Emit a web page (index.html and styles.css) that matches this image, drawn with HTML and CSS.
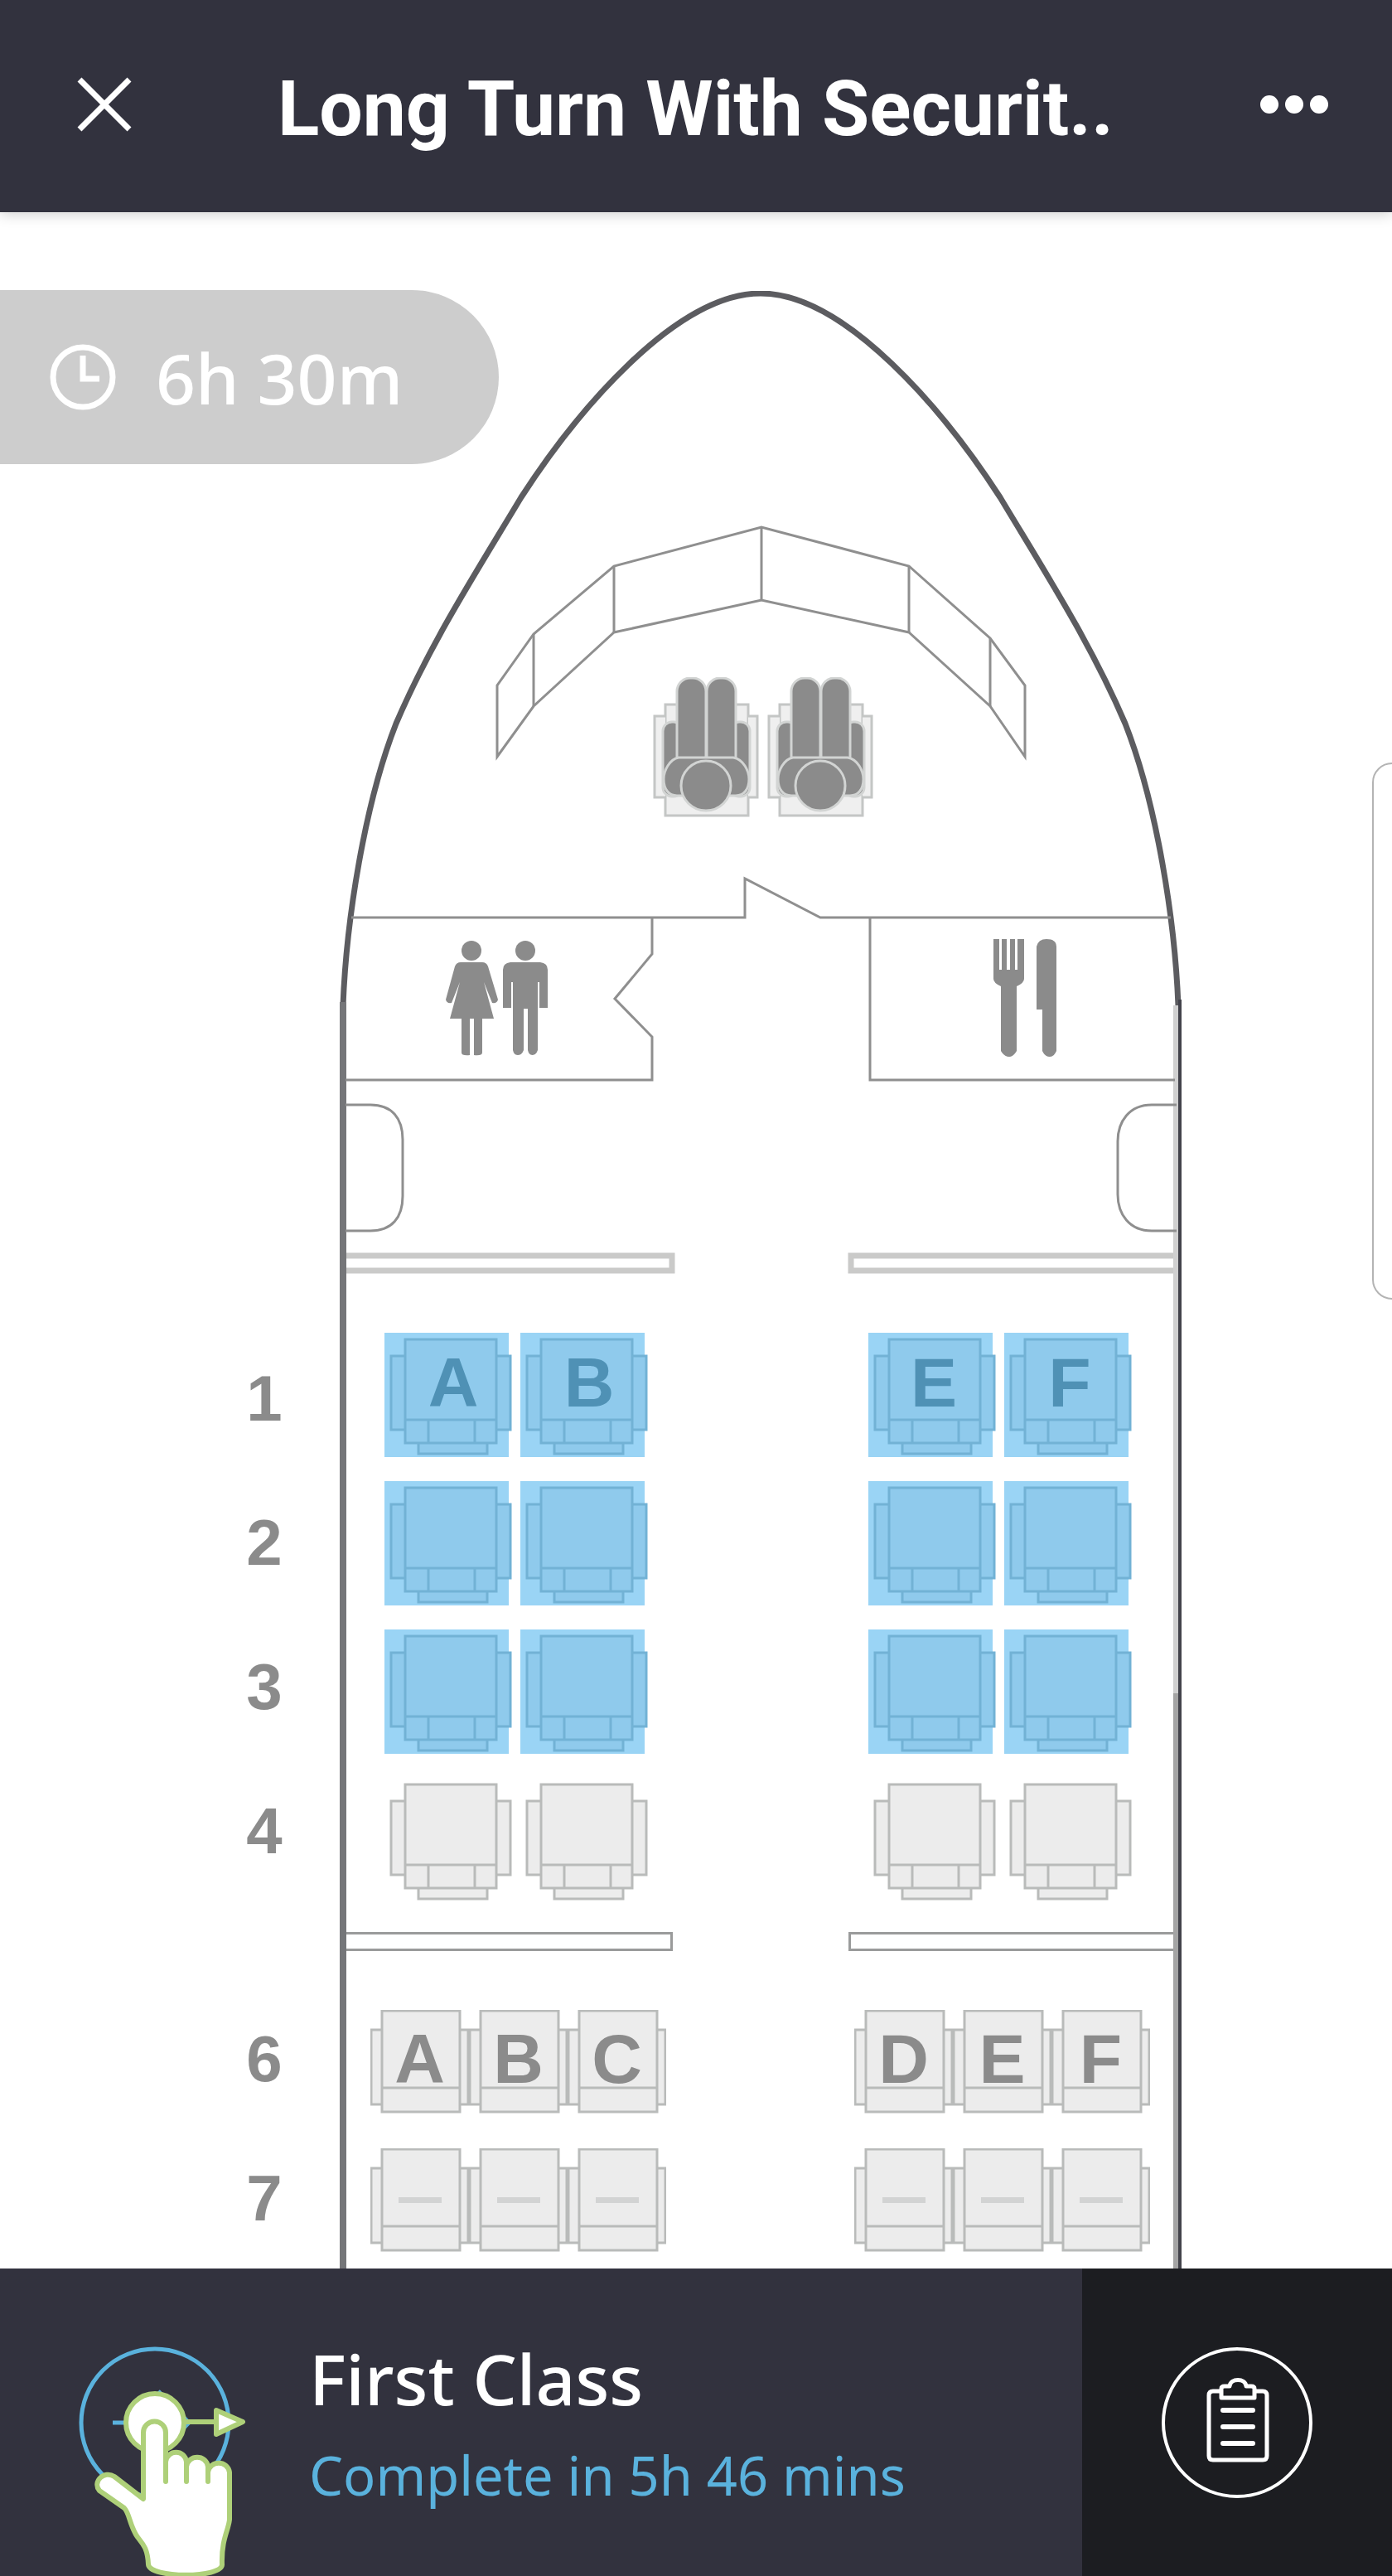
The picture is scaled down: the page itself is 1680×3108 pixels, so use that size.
FILE: index.html
```html
<!DOCTYPE html>
<html lang="en">
<head>
<meta charset="utf-8">
<meta name="viewport" content="width=device-width, initial-scale=1">
<title>Long Turn With Security</title>
<link rel="stylesheet" href="styles.css">
</head>
<body>
<svg class="sprite" aria-hidden="true">
  <symbol id="seat-first" viewBox="0 0 158 150">
    <path d="M25 28H8v89h17M135 28h17v89h-17M41 133v13h83v-13"/>
    <rect x="25" y="8" width="110" height="125"/>
    <path d="M25 105h110M53 105v28M109 105v28"/>
  </symbol>
  <symbol id="seat-economy" viewBox="0 0 119 125">
    <path d="M14 24H1v90h13M108 24h10v90h-10"/>
    <rect x="14" y="1" width="94" height="122"/>
    <path d="M14 94h94"/>
  </symbol>
  <symbol id="pilot" viewBox="0 0 134 172">
    <g class="pilot-seat">
      <path d="M18 33h100v134H18z"/>
      <path d="M18 47H5v98h13M118 47h11v98h-11"/>
    </g>
    <g class="pilot-body">
      <rect x="15" y="54" width="24" height="90" rx="11"/>
      <rect x="96" y="54" width="24" height="90" rx="11"/>
      <rect x="32" y="1" width="35" height="110" rx="16"/>
      <rect x="68" y="1" width="35" height="110" rx="16"/>
      <path d="M34 97h66c12 2 19 16 19 26 0 12-6 20-16 20H32c-10 0-16-8-16-20 0-10 7-24 18-26z"/>
      <circle cx="67" cy="131" r="30"/>
    </g>
  </symbol>
</svg>

<header class="topbar">
  <button class="icon-button" type="button" aria-label="Close">
    <svg width="66" height="66" viewBox="0 0 66 66"><path d="M3 3l60 60M63 3L3 63" stroke="currentColor" stroke-width="7"/></svg>
  </button>
  <h1>Long Turn With Securit..</h1>
  <button class="icon-button" type="button" aria-label="More options">
    <svg width="84" height="24" viewBox="0 0 84 24" fill="currentColor"><circle cx="12" cy="12" r="11"/><circle cx="42" cy="12" r="11"/><circle cx="72" cy="12" r="11"/></svg>
  </button>
</header>

<main class="map">
  <div class="timer">
    <svg width="84" height="84" viewBox="0 0 84 84" fill="none" stroke="currentColor" stroke-width="7"><circle cx="42" cy="42" r="36"/><path d="M42 16v28h20"/></svg>
    <span>6h 30m</span>
  </div>
  <div class="edge-panel"></div>

  <div class="aircraft">
    <svg class="nose" viewBox="410 351 1016 1249" aria-hidden="true">
      <g class="hull">
        <path d="M414 1213C418 1110 440 970 478 873C520 775 575 690 629 600C695 498 815 354 918 354C1021 354 1141 498 1207 600C1261 690 1316 775 1358 873C1396 970 1418 1110 1422 1213"/>
      </g>
      <path class="wall-left" d="M414 1209V1600"/>
      <path class="wall-inner" d="M1419 1213V1600"/>
      <path class="wall-outer" d="M1424 1206V1600"/>
      <g class="line">
        <path d="M600 913V827L644 765L741 683L919 636L1097 683L1195 770L1237 827V913L1195 852L1097 763L919 724L741 763L644 852Z"/>
        <path d="M644 765v87M741 683v80M1097 683v80M1195 770v82M919 636v88"/>
        <path d="M424 1107H899V1060L990 1107H1413"/>
        <path d="M787 1107v44L742 1205L787 1251v52H417"/>
        <path d="M1050 1107v196H1418"/>
        <path d="M417 1333h30c26 0 39 16 39 42v68c0 26-13 42-39 42h-30"/>
        <path d="M1420 1333h-30c-27 0-41 20-41 44v64c0 24 14 44 41 44h30"/>
      </g>
      <g class="partition">
        <path d="M418 1515H811V1533H418"/>
        <path d="M1416 1515H1027V1533H1416"/>
      </g>
      <use href="#pilot" x="785" y="817" width="134" height="172"/>
      <use href="#pilot" x="923" y="817" width="134" height="172"/>
      <g class="glyph">
        <circle cx="569" cy="1147" r="12"/>
        <path d="M556 1161h26q5 0 7 5l12 40q-1 5-7 4l-10-25 12 44h-14v41q0 4-10 3v-44h-5v44q-10 1-10-3v-41h-14l12-44-10 25q-6 1-7-4l11-40q2-5 7-5z"/>
        <circle cx="634" cy="1147" r="12"/>
        <path d="M616 1161h36q9 1 9 9v46h-10v-31h-2v82q-2 6-6 6-5 0-6-6v-50h-5v50q-2 6-7 6-5 0-6-6v-82h-2v31h-10v-46q0-8 9-9z"/>
        <path d="M1199 1133h7v37h3v-37h6v37h4v-37h6v37h3v-37h8v48q0 5-9 9v78q-4 7-9 7-6 0-10-7v-78q-9-4-9-9z"/>
        <path d="M1251 1142q2-9 12-9 12 0 12 9v126q-3 7-8 7-6 0-9-7v-50h-7z"/>
      </g>
    </svg>

    <div class="cabin-area">
      <div class="row-numbers">
        <ol class="numbers-first"><li>1</li><li>2</li><li>3</li><li>4</li></ol>
        <ol class="numbers-economy"><li>6</li><li>7</li></ol>
      </div>

      <div class="cabin">
        <section class="first-class" aria-label="First class">
          <div class="seat-row">
            <div class="block">
              <button type="button" class="seat selected" aria-label="1A"><svg><use href="#seat-first"/></svg><span>A</span></button>
              <button type="button" class="seat selected" aria-label="1B"><svg><use href="#seat-first"/></svg><span>B</span></button>
            </div>
            <div class="block block-right">
              <button type="button" class="seat selected" aria-label="1E"><svg><use href="#seat-first"/></svg><span>E</span></button>
              <button type="button" class="seat selected" aria-label="1F"><svg><use href="#seat-first"/></svg><span>F</span></button>
            </div>
          </div>
          <div class="seat-row">
            <div class="block">
              <button type="button" class="seat selected" aria-label="2A"><svg><use href="#seat-first"/></svg></button>
              <button type="button" class="seat selected" aria-label="2B"><svg><use href="#seat-first"/></svg></button>
            </div>
            <div class="block block-right">
              <button type="button" class="seat selected" aria-label="2E"><svg><use href="#seat-first"/></svg></button>
              <button type="button" class="seat selected" aria-label="2F"><svg><use href="#seat-first"/></svg></button>
            </div>
          </div>
          <div class="seat-row">
            <div class="block">
              <button type="button" class="seat selected" aria-label="3A"><svg><use href="#seat-first"/></svg></button>
              <button type="button" class="seat selected" aria-label="3B"><svg><use href="#seat-first"/></svg></button>
            </div>
            <div class="block block-right">
              <button type="button" class="seat selected" aria-label="3E"><svg><use href="#seat-first"/></svg></button>
              <button type="button" class="seat selected" aria-label="3F"><svg><use href="#seat-first"/></svg></button>
            </div>
          </div>
          <div class="seat-row">
            <div class="block">
              <button type="button" class="seat" aria-label="4A"><svg><use href="#seat-first"/></svg></button>
              <button type="button" class="seat" aria-label="4B"><svg><use href="#seat-first"/></svg></button>
            </div>
            <div class="block block-right">
              <button type="button" class="seat" aria-label="4E"><svg><use href="#seat-first"/></svg></button>
              <button type="button" class="seat" aria-label="4F"><svg><use href="#seat-first"/></svg></button>
            </div>
          </div>
        </section>

        <div class="bulkhead"><span class="divider divider-left"></span><span class="divider divider-right"></span></div>

        <section class="economy" aria-label="Economy">
          <div class="seat-row">
            <div class="block">
              <button type="button" class="seat" aria-label="6A"><svg><use href="#seat-economy"/></svg><span>A</span></button>
              <button type="button" class="seat" aria-label="6B"><svg><use href="#seat-economy"/></svg><span>B</span></button>
              <button type="button" class="seat" aria-label="6C"><svg><use href="#seat-economy"/></svg><span>C</span></button>
            </div>
            <div class="block">
              <button type="button" class="seat" aria-label="6D"><svg><use href="#seat-economy"/></svg><span>D</span></button>
              <button type="button" class="seat" aria-label="6E"><svg><use href="#seat-economy"/></svg><span>E</span></button>
              <button type="button" class="seat" aria-label="6F"><svg><use href="#seat-economy"/></svg><span>F</span></button>
            </div>
          </div>
          <div class="seat-row">
            <div class="block">
              <button type="button" class="seat" aria-label="7A"><svg><use href="#seat-economy"/></svg><i></i></button>
              <button type="button" class="seat" aria-label="7B"><svg><use href="#seat-economy"/></svg><i></i></button>
              <button type="button" class="seat" aria-label="7C"><svg><use href="#seat-economy"/></svg><i></i></button>
            </div>
            <div class="block">
              <button type="button" class="seat" aria-label="7D"><svg><use href="#seat-economy"/></svg><i></i></button>
              <button type="button" class="seat" aria-label="7E"><svg><use href="#seat-economy"/></svg><i></i></button>
              <button type="button" class="seat" aria-label="7F"><svg><use href="#seat-economy"/></svg><i></i></button>
            </div>
          </div>
        </section>
      </div>
    </div>
  </div>
</main>

<footer class="actionbar">
  <div class="task">
    <button class="swipe" type="button" aria-label="Swipe to complete">
      <svg width="184" height="184" viewBox="0 0 184 184" fill="none" stroke="currentColor" stroke-width="5"><circle cx="92" cy="92" r="89"/><path d="M41 92h90M96 54l37 38-37 38"/></svg>
      <svg class="gesture" width="184" height="228" viewBox="113 2880 184 228" fill="#fff" stroke="#aed079" stroke-width="6" stroke-linejoin="round" stroke-linecap="round" aria-hidden="true">
        <circle cx="187" cy="2921" r="35"/>
        <path d="M222 2920h39M261 2906v29l32-15z"/>
        <path d="M173 3013V2933a13 13 0 0 1 27 0V2992V2968c2-15 23-15 25 0V2992V2974c2-15 24-15 26 0V2992V2981c2-15 24-15 26 0V3038C276 3050 267 3062 268 3092C269 3109 180 3109 179 3092C178 3068 169 3065 164 3056C156 3042 156 3030 150 3024L120 3003C111 2992 126 2978 138 2986Z"/>
      </svg>
    </button>
    <div class="task-text">
      <h2>First Class</h2>
      <p>Complete in 5h 46 mins</p>
    </div>
  </div>
  <button class="checklist" type="button" aria-label="Checklist">
    <svg width="184" height="184" viewBox="0 0 184 184" fill="none" stroke="currentColor" stroke-width="5" stroke-linejoin="round" stroke-linecap="round">
      <circle cx="92" cy="92" r="89" stroke-width="4"/>
      <path d="M72 54H63q-5 0-5 5v73q0 5 5 5h60q5 0 5-5V59q0-5-5-5h-9"/>
      <path d="M73 62V51q0-3 4-3h6c1-10 19-10 20 0h6q4 0 4 3v11z"/>
      <path d="M75 77h36M75 97h36M75 117h36" stroke-width="6"/>
    </svg>
  </button>
</footer>
</body>
</html>
```

FILE: styles.css
```css
* { box-sizing: border-box; }

body {
  margin: 0;
  min-height: 100vh;
  display: flex;
  flex-direction: column;
  background: #fff;
  font-family: "Noto Sans", "Open Sans", sans-serif;
  color: #fff;
}

h1, h2, p, ol { margin: 0; padding: 0; font-weight: inherit; }
ol { list-style: none; }

button {
  padding: 0;
  border: 0;
  background: none;
  color: inherit;
  font: inherit;
  cursor: pointer;
}

svg { display: block; }

.sprite { position: absolute; width: 0; height: 0; }

/* Top bar */
.topbar {
  position: relative;
  display: flex;
  align-items: center;
  justify-content: space-between;
  height: 256px;
  padding: 0 76px 4px 93px;
  background: #32323e;
  box-shadow: 0 2px 16px rgba(0, 0, 0, 0.2);
  z-index: 1;
}

.topbar h1 {
  padding-top: 12px;
  font-family: Roboto, sans-serif;
  font-size: 93px;
  font-weight: 700;
  line-height: 120px;
  white-space: nowrap;
}

/* Seat map */
.map {
  position: relative;
  flex: 1;
  overflow: hidden;
}

.timer {
  position: absolute;
  top: 94px;
  left: 0;
  display: flex;
  align-items: center;
  gap: 46px;
  width: 602px;
  height: 210px;
  padding-left: 58px;
  border-radius: 0 105px 105px 0;
  background: #cdcdcd;
  font-size: 84px;
  font-weight: 500;
}

.edge-panel {
  position: absolute;
  top: 664px;
  right: -24px;
  width: 48px;
  height: 648px;
  border: 2px solid #b4b4b4;
  border-radius: 32px;
  background: #fff;
}

.aircraft {
  width: 1172px;
  margin: 0 auto;
  padding-top: 95px;
}

.nose {
  width: 1016px;
  margin-left: auto;
}

.nose path { fill: none; }
.hull { stroke: #5c5c60; stroke-width: 7; }
.wall-left { stroke: #757679; stroke-width: 8; }
.wall-inner { stroke: #d0d0d0; stroke-width: 6; }
.wall-outer { stroke: #43434b; stroke-width: 4; }
.line { stroke: #8f8f8f; stroke-width: 3; }
.partition { stroke: #cacac9; stroke-width: 7; }
.nose .glyph path, .glyph { fill: #8b8b8b; }
.pilot-seat path { fill: #efefef; stroke: #c4c6c5; stroke-width: 3; }
.pilot-body * { fill: #8b8b8b; stroke: #d2d4d3; stroke-width: 3; }

.cabin-area {
  display: grid;
  grid-template-columns: 130px 1016px;
  column-gap: 26px;
}

.row-numbers {
  color: #8b8b8b;
  font-family: "Liberation Sans", Arial, sans-serif;
  font-size: 78px;
  font-weight: 700;
  text-align: center;
}

.numbers-first { line-height: 174px; }
.numbers-economy { margin-top: 104px; line-height: 168px; }

.cabin {
  padding: 8px 0 20px;
  border-left: 8px solid #757679;
  border-right: 4px solid #43434b;
  background: linear-gradient(#d0d0d0 443px, #a4a4a4 0) right / 6px 100% no-repeat;
}

.first-class, .economy { display: flex; flex-direction: column; }
.first-class { gap: 29px; padding: 0 60px 0 46px; }
.economy { gap: 42px; padding: 0 34px 0 29px; }

.seat-row { display: flex; justify-content: space-between; }
.block { display: flex; }
.first-class .block { gap: 14px; }

.seat {
  display: grid;
  color: #8b8b8b;
  font-family: "Liberation Sans", Arial, sans-serif;
  font-size: 84px;
  font-weight: 700;
}

.seat > * { grid-area: 1 / 1; }

.seat svg {
  fill: #ececec;
  stroke: #b9bbba;
  stroke-width: 3;
  overflow: visible;
}

.first-class .seat { width: 150px; height: 150px; }
.first-class .seat svg { width: 158px; height: 150px; }
.first-class .seat span { padding-left: 8px; line-height: 120px; }
.first-class .block-right .seat span { padding-left: 0; }

.economy .seat { width: 119px; height: 125px; }
.economy .seat svg { width: 119px; height: 125px; }
.economy .seat span { line-height: 118px; }

.seat i {
  align-self: center;
  justify-self: center;
  width: 52px;
  height: 7px;
  background: #d2d3d3;
}

.seat.selected { background: #9ad4f5; color: #4f91b5; }
.selected svg { fill: #8fcaec; stroke: #72b2d5; }

.bulkhead {
  display: flex;
  justify-content: space-between;
  margin: 36px 6px 71px 0;
}

.divider {
  height: 23px;
  border: 3px solid #9a9b9b;
  background: #fff;
}

.divider-left { width: 394px; border-left: 0; }
.divider-right { width: 392px; border-right: 0; }

/* Bottom bar */
.actionbar {
  position: relative;
  display: flex;
  height: 371px;
  background: #32323e;
}

.task {
  flex: 1;
  display: flex;
  align-items: center;
  gap: 94px;
  padding-left: 95px;
}

.swipe { position: relative; color: #5ab2dd; }

.gesture {
  position: absolute;
  top: 51px;
  left: 18px;
}

.task-text { display: grid; gap: 18px; white-space: nowrap; }
.task-text h2 { font-size: 84px; font-weight: 500; line-height: 108px; }
.task-text p { color: #5ab2dd; font-size: 65px; line-height: 88px; }

.checklist {
  display: flex;
  align-items: center;
  justify-content: center;
  width: 374px;
  background: #1c1d21;
}
```
